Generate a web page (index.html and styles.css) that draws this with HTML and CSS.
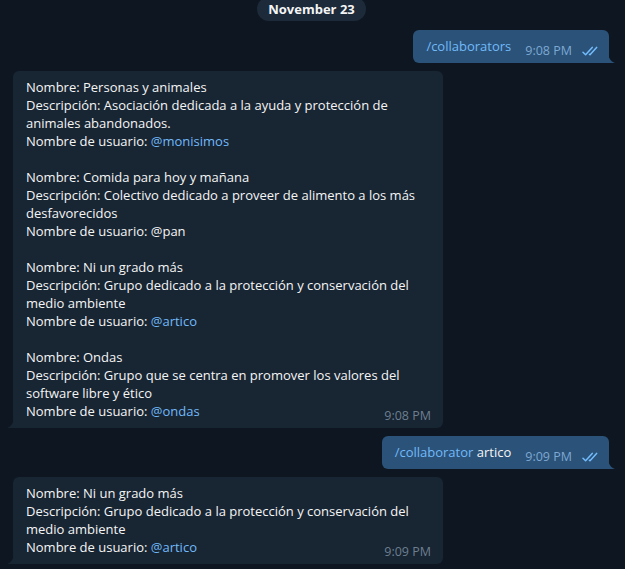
FILE: index.html
```html
<!DOCTYPE html>
<html lang="es">
<head>
<meta charset="utf-8">
<title>Chat</title>
<link rel="stylesheet" href="styles.css">
</head>
<body>
<div class="chat">
  <div class="date-row"><span class="date-pill">November 23</span></div>

  <div class="msg out">
    <div class="bubble bubble-out">
      <span class="text"><span class="cmd">/collaborators</span></span>
      <span class="meta"><span class="time">9:08 PM</span>
        <svg class="checks" width="18" height="10" viewBox="0 0 18 10"><path d="M1 6.2 L3.6 8.8 L10.2 1.4 M7.4 8.2 L8 8.8 L14.6 1.4" fill="none" stroke="#72bcfd" stroke-width="1.5" stroke-linecap="round" stroke-linejoin="round"/></svg>
      </span>
      <svg class="tail tail-out" width="8" height="12" viewBox="0 0 8 12"><path d="M0 0 C0 6 2 10 7 12 L0 12 Z" fill="#2b5278"/></svg>
    </div>
  </div>

  <div class="msg in">
    <div class="bubble bubble-in">
      <p>Nombre: Personas y animales<br>Descripción: Asociación dedicada a la ayuda y protección de animales abandonados.<br>Nombre de usuario: <a class="link">@monisimos</a></p>
      <p>Nombre: Comida para hoy y mañana<br>Descripción: Colectivo dedicado a proveer de alimento a los más desfavorecidos<br>Nombre de usuario: @pan</p>
      <p>Nombre: Ni un grado más<br>Descripción: Grupo dedicado a la protección y conservación del medio ambiente<br>Nombre de usuario: <a class="link">@artico</a></p>
      <p>Nombre: Ondas<br>Descripción: Grupo que se centra en promover los valores del software libre y ético<br>Nombre de usuario: <a class="link">@ondas</a></p>
      <span class="time time-in">9:08 PM</span>
      <svg class="tail tail-in" width="8" height="12" viewBox="0 0 8 12"><path d="M8 0 C8 6 6 10 1 12 L8 12 Z" fill="#182533"/></svg>
    </div>
  </div>

  <div class="msg out">
    <div class="bubble bubble-out">
      <span class="text"><span class="cmd">/collaborator</span> artico</span>
      <span class="meta"><span class="time">9:09 PM</span>
        <svg class="checks" width="18" height="10" viewBox="0 0 18 10"><path d="M1 6.2 L3.6 8.8 L10.2 1.4 M7.4 8.2 L8 8.8 L14.6 1.4" fill="none" stroke="#72bcfd" stroke-width="1.5" stroke-linecap="round" stroke-linejoin="round"/></svg>
      </span>
      <svg class="tail tail-out" width="8" height="12" viewBox="0 0 8 12"><path d="M0 0 C0 6 2 10 7 12 L0 12 Z" fill="#2b5278"/></svg>
    </div>
  </div>

  <div class="msg in">
    <div class="bubble bubble-in">
      <p>Nombre: Ni un grado más<br>Descripción: Grupo dedicado a la protección y conservación del medio ambiente<br>Nombre de usuario: <a class="link">@artico</a></p>
      <span class="time time-in">9:09 PM</span>
      <svg class="tail tail-in" width="8" height="12" viewBox="0 0 8 12"><path d="M8 0 C8 6 6 10 1 12 L8 12 Z" fill="#182533"/></svg>
    </div>
  </div>
</div>
</body>
</html>
```

FILE: styles.css
```css
html, body {
  margin: 0;
  padding: 0;
  background: #0e1621;
  height: 100%;
  overflow: hidden;
}

body {
  font-family: "Open Sans", "Noto Sans", sans-serif;
  font-size: 13px;
  line-height: 18px;
  color: #f5f5f5;
}

.chat {
  display: flex;
  flex-direction: column;
}

.date-row {
  display: flex;
  justify-content: center;
  margin-top: -3px;
  padding-right: 2px;
}

.date-pill {
  background: #1c2a39;
  color: #f5f5f5;
  font-weight: 700;
  font-size: 13px;
  line-height: 24px;
  padding: 0 11px;
  border-radius: 12px;
}

.msg {
  display: flex;
}

.msg.out {
  justify-content: flex-end;
  padding-right: 16px;
  margin-top: 8px;
}

.msg.in {
  justify-content: flex-start;
  padding-left: 13px;
  margin-top: 8px;
}

.chat .msg:nth-child(2) {
  margin-top: 9px;
}

.bubble {
  position: relative;
  border-radius: 6px;
}

.bubble-out {
  background: #2b5278;
  border-bottom-right-radius: 0;
  display: flex;
  align-items: flex-end;
  padding: 7px 9px 8px 13px;
}

.bubble-out .text {
  line-height: 18px;
}

.cmd {
  color: #71bafa;
}

.meta {
  display: flex;
  align-items: center;
  margin-left: 14px;
  margin-bottom: -3px;
  height: 14px;
}

.time {
  font-size: 12.5px;
  line-height: 14px;
  color: #7da8d3;
}

.checks {
  margin-left: 10px;
  display: block;
}

.bubble-in {
  background: #182533;
  border-bottom-left-radius: 0;
  width: 404px;
  padding: 7px 13px 8px 13px;
}

.bubble-in p {
  margin: 0 0 18px 0;
}

.bubble-in p:last-of-type {
  margin-bottom: 0;
}

.link {
  color: #71bafa;
  text-decoration: none;
}

.time-in {
  position: absolute;
  right: 12px;
  bottom: 5px;
  color: #6d7f8f;
}

.tail {
  position: absolute;
  bottom: 0;
  display: block;
}

.tail-out {
  right: -7px;
}

.tail-in {
  left: -7px;
}
```
